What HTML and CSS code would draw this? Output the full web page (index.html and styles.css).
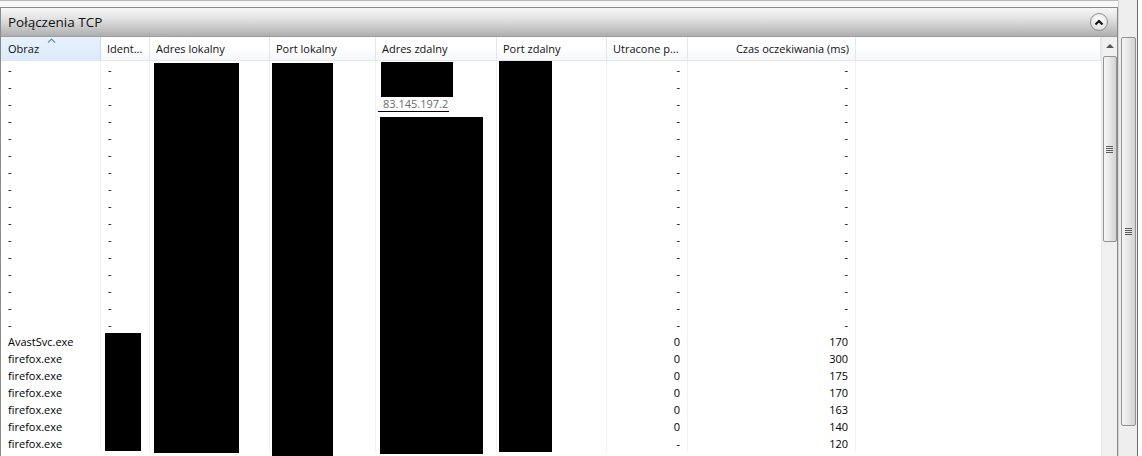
FILE: index.html
```html
<!DOCTYPE html>
<html lang="pl">
<head>
  <meta charset="UTF-8" />
  <title>Połączenia TCP</title>
  <link rel="stylesheet" href="styles.css">
</head>
<body>
  <div class="page">
    <div class="panel-wrap">
      <div class="panel">
        <!-- pasek tytułu -->
        <div class="title">
          <span>Połączenia TCP</span>
          <span class="collapse">
            <svg width="10" height="7" viewBox="0 0 10 7"><path d="M1.5 5.5 L5 2 L8.5 5.5" fill="none" stroke="#111" stroke-width="2.2"/></svg>
          </span>
        </div>

        <div class="grid-area">
          <div class="list">
            <div class="row head">
              <div class="cell sorted">Obraz
                <svg class="sort" width="9" height="5" viewBox="0 0 9 5"><path d="M1 4.5 L4.5 1 L8 4.5" fill="none" stroke="#6b8fb5" stroke-width="1.2"/></svg>
              </div>
              <div class="cell">Ident...</div>
              <div class="cell">Adres lokalny</div>
              <div class="cell">Port lokalny</div>
              <div class="cell">Adres zdalny</div>
              <div class="cell">Port zdalny</div>
              <div class="cell">Utracone p...</div>
              <div class="cell num">Czas oczekiwania (ms)</div>
              <div class="cell last"></div>
            </div>

            <div id="rows"></div>

            <!-- zamazane pola -->
            <div class="blackout" style="left:104px; top:296px; width:36px; height:118px;"></div>
            <div class="blackout" style="left:153px; top:26px; width:85px; height:390px;"></div>
            <div class="blackout" style="left:271px; top:26px; width:61px; height:400px;"></div>
            <div class="blackout" style="left:380px; top:25px; width:72px; height:35px;"></div>
            <div class="blackout" style="left:379px; top:80px; width:103px; height:337px;"></div>
            <div class="blackout" style="left:498px; top:24px; width:53px; height:391px;"></div>
          </div>

          <div class="vscroll">
            <div class="arrow-up"></div>
            <div class="thumb small"><span class="grip"></span></div>
          </div>
        </div>
      </div>
    </div>

    <div class="outer-scroll">
      <div class="thumb big"><span class="grip"></span></div>
    </div>
  </div>

  <script>
    // dane wierszy: obraz, czas, utracone
    const data = [];
    for (let i = 0; i < 16; i++) {
      data.push({ name: '-', ident: '-', lost: '-', wait: '-' });
    }
    data.push({ name: 'AvastSvc.exe', ident: '', lost: '0', wait: '170' });
    const waits = ['300', '175', '170', '163', '140', '120'];
    waits.forEach((w, i) => {
      data.push({ name: 'firefox.exe', ident: '', lost: i === 5 ? '-' : '0', wait: w });
    });

    const rowsEl = document.getElementById('rows');
    data.forEach((d, i) => {
      const row = document.createElement('div');
      row.className = 'row';
      const remote = i === 2 ? '<span class="edit">83.145.197.2</span>' : '';
      row.innerHTML =
        `<div class="cell">${d.name}</div>` +
        `<div class="cell">${d.ident}</div>` +
        `<div class="cell"></div>` +
        `<div class="cell"></div>` +
        `<div class="cell">${remote}</div>` +
        `<div class="cell"></div>` +
        `<div class="cell num">${d.lost}</div>` +
        `<div class="cell num">${d.wait}</div>` +
        `<div class="cell last"></div>`;
      rowsEl.appendChild(row);
    });
  </script>
</body>
</html>
```

FILE: styles.css
```css
body {
  margin: 0;
  padding: 0;
  background-color: #ffffff;
  font-family: "Open Sans", "Noto Sans", sans-serif;
  overflow: hidden;
}
.page {
  display: flex;
  height: 456px;
  width: 1142px;
}
.panel-wrap {
  width: 1118px;
  border-top: 1px solid #b9b9b9;
  padding-top: 6px;
  background-color: #f8f8f8;
  display: flex;
  flex-direction: column;
}
.panel {
  flex: 1;
  border: 1px solid #8a8a8a;
  border-bottom: none;
  display: flex;
  flex-direction: column;
  background-color: #ffffff;
  min-height: 0;
}
.title {
  display: flex;
  align-items: center;
  justify-content: space-between;
  padding: 0 9px 0 7px;
  font-size: 13.5px;
  color: #111;
  background: linear-gradient(#f7f7f7, #e4e4e4 35%, #c4c4c4 75%, #aeaeae);
  border-bottom: 1px solid #9d9d9d;
  box-sizing: border-box;
  height: 29px;
}
.collapse {
  width: 18px;
  height: 18px;
  box-sizing: border-box;
  border: 1px solid #8f8f8f;
  border-radius: 50%;
  background: radial-gradient(circle at 50% 35%, #ffffff, #e4e4e4 70%, #cfcfcf);
  display: flex;
  align-items: center;
  justify-content: center;
}
.grid-area {
  flex: 1;
  display: flex;
  min-height: 0;
}
.list {
  position: relative;
  width: 1100px;
  overflow: hidden;
}
.row {
  display: grid;
  grid-template-columns: 100px 49px 120px 106px 121px 110px 81px 168px 1fr;
  height: 17px;
  font-size: 11px;
  line-height: 17px;
  color: #000;
}
.cell {
  padding: 0 7px;
  border-right: 1px solid #f1f1f1;
  white-space: nowrap;
  overflow: hidden;
}
.cell.num {
  text-align: right;
  padding-right: 7px;
}
.cell.last {
  border-right: none;
}
.row.head {
  height: 24px;
  line-height: 23px;
  font-size: 11px;
  color: #111;
  background: linear-gradient(#ffffff, #ffffff 45%, #f6f7f9);
  border-bottom: 1px solid #e4e6e9;
  box-sizing: border-box;
}
.row.head .cell {
  border-right: 1px solid #e3e6ea;
  position: relative;
  padding-left: 6px;
}
.row.head .cell.num {
  padding-right: 6px;
}
.row.head .cell.sorted {
  background: linear-gradient(#e8f2fc, #dbeafa);
  border-right: 1px solid #c5dcf2;
  padding-left: 7px;
}
.sort {
  position: absolute;
  left: 46px;
  top: 1px;
}
.edit {
  display: inline-block;
  margin-left: -5px;
  padding-left: 5px;
  width: 66px;
  line-height: 15px;
  color: #6b6b6b;
  border-bottom: 1px solid #000;
}
.blackout {
  position: absolute;
  background-color: #000;
}
.vscroll {
  width: 16px;
  background-color: #f0f0f0;
  border-left: 1px solid #e9e9e9;
  box-sizing: border-box;
  display: flex;
  flex-direction: column;
  align-items: center;
}
.arrow-up {
  margin-top: 7px;
  width: 0;
  height: 0;
  border-left: 4px solid transparent;
  border-right: 4px solid transparent;
  border-bottom: 4px solid #555;
}
.thumb {
  box-sizing: border-box;
  border: 1px solid #939393;
  border-radius: 2px;
  background: linear-gradient(90deg, #f6f6f6, #e6e6e6 50%, #d3d3d3);
  display: flex;
  align-items: center;
  justify-content: center;
}
.thumb.small {
  margin-top: 8px;
  width: 14px;
  height: 186px;
}
.grip {
  width: 7px;
  height: 7px;
  background: repeating-linear-gradient(#5e5e5e 0 1px, transparent 1px 2px);
}
.outer-scroll {
  width: 20px;
  box-sizing: border-box;
  border-right: 1px solid #6d6d6d;
  border-left: 1px solid #d6d6d6;
  background-color: #eeeeee;
  display: flex;
  flex-direction: column;
  align-items: center;
}
.thumb.big {
  margin-top: 37px;
  width: 15px;
  height: 389px;
}
```
